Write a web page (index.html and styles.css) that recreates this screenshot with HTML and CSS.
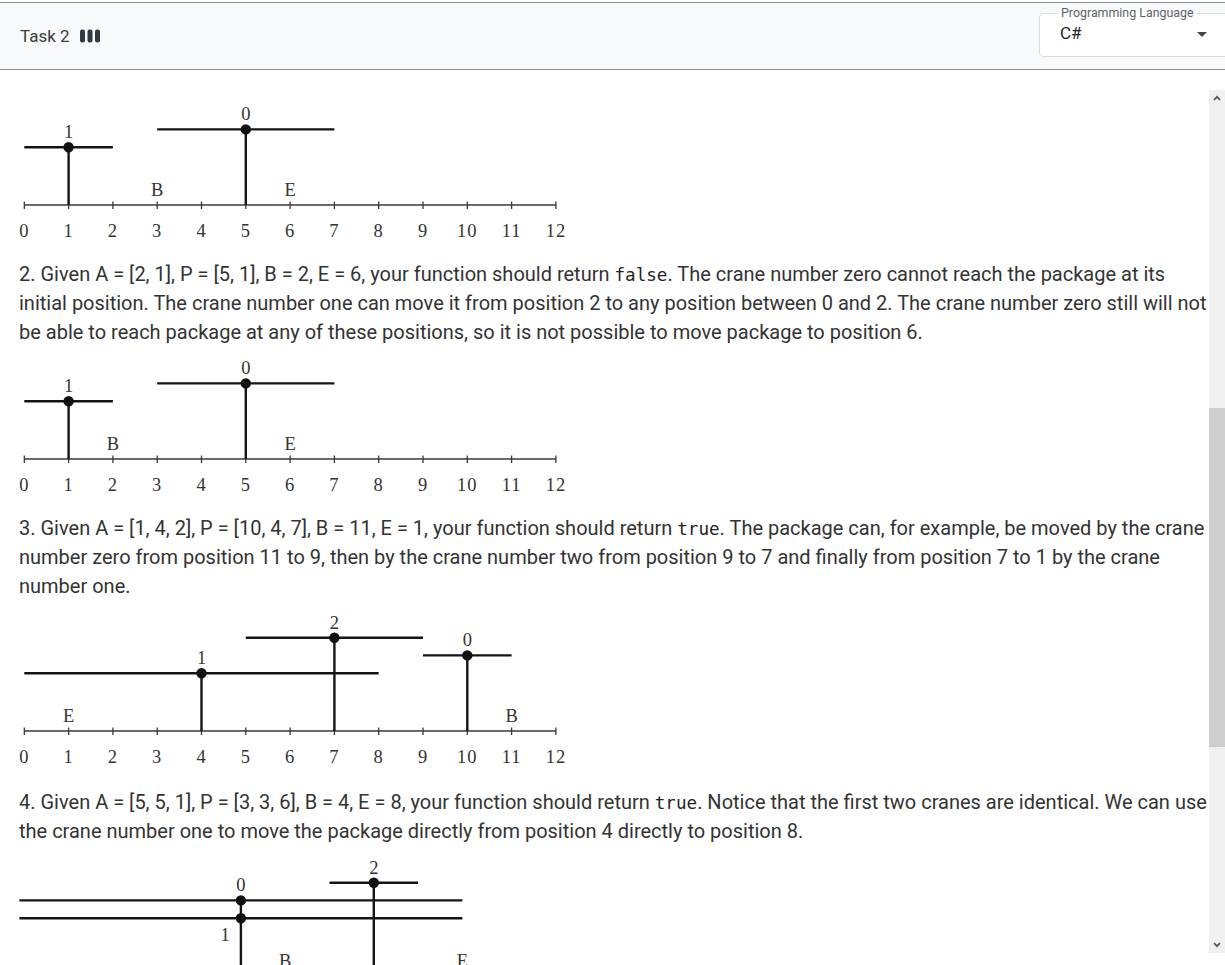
FILE: index.html
```html
<!DOCTYPE html>
<html lang="en">
<head>
<meta charset="utf-8">
<title>Task 2</title>
<link rel="stylesheet" href="styles.css">
</head>
<body>
<header class="topbar">
  <div class="task">
    <span class="task-title">Task 2</span>
    <svg class="task-icon" width="20" height="14" viewBox="0 0 20 14" aria-hidden="true">
      <rect x="0" y="0.5" width="5" height="13" rx="2"/>
      <rect x="7.5" y="0.5" width="5" height="13" rx="2"/>
      <rect x="15" y="0.5" width="5" height="13" rx="2"/>
    </svg>
  </div>
  <fieldset class="lang">
    <legend class="lang-label">Programming Language</legend>
    <div class="lang-value">
      <span>C#</span>
      <svg class="caret" width="10" height="5" viewBox="0 0 10 5" aria-hidden="true"><polygon points="0,0 10,0 5,5"/></svg>
    </div>
  </fieldset>
</header>
<main class="main">
  <div class="content">
    <svg class="diagram" width="580" height="167" viewBox="0 0 580 167">
      <line class="axis" x1="5.3" y1="112" x2="536.9" y2="112"/>
      <path class="axis" d="M5.3 108.5V116M49.6 108.5V116M93.9 108.5V116M138.2 108.5V116M182.5 108.5V116M226.8 108.5V116M271.1 108.5V116M315.4 108.5V116M359.7 108.5V116M404 108.5V116M448.3 108.5V116M492.6 108.5V116M536.9 108.5V116"/>
      <g class="num">
        <text x="5.3" y="144">0</text><text x="49.6" y="144">1</text><text x="93.9" y="144">2</text><text x="138.2" y="144">3</text><text x="182.5" y="144">4</text><text x="226.8" y="144">5</text><text x="271.1" y="144">6</text><text x="315.4" y="144">7</text><text x="359.7" y="144">8</text><text x="404" y="144">9</text><text x="448.3" y="144">10</text><text x="492.6" y="144">11</text><text x="536.9" y="144">12</text>
      </g>
      <path class="crane" d="M5.3 54.3H93.9M49.6 54.3V112"/>
      <circle class="dot" cx="49.6" cy="54.3" r="5.2"/>
      <path class="crane" d="M138.2 36.4H315.4M226.8 36.4V112"/>
      <circle class="dot" cx="226.8" cy="36.4" r="5.2"/>
      <g class="lbl">
        <text x="49.6" y="45.3">1</text><text x="226.8" y="27.4">0</text>
        <text x="138.2" y="103">B</text><text x="271.1" y="103">E</text>
      </g>
    </svg>
    <p class="text">2. Given A = [2, 1], P = [5, 1], B = 2, E = 6, your function should return <code>false</code>. The crane number zero cannot reach the package at its initial position. The crane number one can move it from position 2 to any position between 0 and 2. The crane number zero still will not be able to reach package at any of these positions, so it is not possible to move package to position 6.</p>
    <svg class="diagram" width="580" height="167" viewBox="0 0 580 167">
      <line class="axis" x1="5.3" y1="112" x2="536.9" y2="112"/>
      <path class="axis" d="M5.3 108.5V116M49.6 108.5V116M93.9 108.5V116M138.2 108.5V116M182.5 108.5V116M226.8 108.5V116M271.1 108.5V116M315.4 108.5V116M359.7 108.5V116M404 108.5V116M448.3 108.5V116M492.6 108.5V116M536.9 108.5V116"/>
      <g class="num">
        <text x="5.3" y="144">0</text><text x="49.6" y="144">1</text><text x="93.9" y="144">2</text><text x="138.2" y="144">3</text><text x="182.5" y="144">4</text><text x="226.8" y="144">5</text><text x="271.1" y="144">6</text><text x="315.4" y="144">7</text><text x="359.7" y="144">8</text><text x="404" y="144">9</text><text x="448.3" y="144">10</text><text x="492.6" y="144">11</text><text x="536.9" y="144">12</text>
      </g>
      <path class="crane" d="M5.3 54.3H93.9M49.6 54.3V112"/>
      <circle class="dot" cx="49.6" cy="54.3" r="5.2"/>
      <path class="crane" d="M138.2 36.4H315.4M226.8 36.4V112"/>
      <circle class="dot" cx="226.8" cy="36.4" r="5.2"/>
      <g class="lbl">
        <text x="49.6" y="45.3">1</text><text x="226.8" y="27.4">0</text>
        <text x="93.9" y="103">B</text><text x="271.1" y="103">E</text>
      </g>
    </svg>
    <p class="text">3. Given A = [1, 4, 2], P = [10, 4, 7], B = 11, E = 1, your function should return <code>true</code>. The package can, for example, be moved by the crane number zero from position 11 to 9, then by the crane number two from position 9 to 7 and finally from position 7 to 1 by the crane number one.</p>
    <svg class="diagram" width="580" height="187" viewBox="0 0 580 187">
      <line class="axis" x1="5.3" y1="130" x2="536.9" y2="130"/>
      <path class="axis" d="M5.3 126.5V134M49.6 126.5V134M93.9 126.5V134M138.2 126.5V134M182.5 126.5V134M226.8 126.5V134M271.1 126.5V134M315.4 126.5V134M359.7 126.5V134M404 126.5V134M448.3 126.5V134M492.6 126.5V134M536.9 126.5V134"/>
      <g class="num">
        <text x="5.3" y="162">0</text><text x="49.6" y="162">1</text><text x="93.9" y="162">2</text><text x="138.2" y="162">3</text><text x="182.5" y="162">4</text><text x="226.8" y="162">5</text><text x="271.1" y="162">6</text><text x="315.4" y="162">7</text><text x="359.7" y="162">8</text><text x="404" y="162">9</text><text x="448.3" y="162">10</text><text x="492.6" y="162">11</text><text x="536.9" y="162">12</text>
      </g>
      <path class="crane" d="M5.3 72.3H359.7M182.5 72.3V130"/>
      <circle class="dot" cx="182.5" cy="72.3" r="5.2"/>
      <path class="crane" d="M226.8 36.7H404M315.4 36.7V130"/>
      <circle class="dot" cx="315.4" cy="36.7" r="5.2"/>
      <path class="crane" d="M404 54.4H492.6M448.3 54.4V130"/>
      <circle class="dot" cx="448.3" cy="54.4" r="5.2"/>
      <g class="lbl">
        <text x="182.5" y="63.3">1</text><text x="315.4" y="27.7">2</text><text x="448.3" y="45.4">0</text>
        <text x="49.6" y="121">E</text><text x="492.6" y="121">B</text>
      </g>
    </svg>
    <p class="text">4. Given A = [5, 5, 1], P = [3, 3, 6], B = 4, E = 8, your function should return <code>true</code>. Notice that the first two cranes are identical. We can use the crane number one to move the package directly from position 4 directly to position 8.</p>
    <svg class="diagram" width="580" height="187" viewBox="0 0 580 187">
      <line class="axis" x1="89" y1="130" x2="531" y2="130"/>
      <path class="axis" d="M89 126.5V134M133.3 126.5V134M177.6 126.5V134M221.9 126.5V134M266.2 126.5V134M310.5 126.5V134M354.8 126.5V134M399.1 126.5V134M443.4 126.5V134M487.7 126.5V134M531 126.5V134"/>
      <g class="num">
        <text x="89" y="162">0</text><text x="133.3" y="162">1</text><text x="177.6" y="162">2</text><text x="221.9" y="162">3</text><text x="266.2" y="162">4</text><text x="310.5" y="162">5</text><text x="354.8" y="162">6</text><text x="399.1" y="162">7</text><text x="443.4" y="162">8</text><text x="487.7" y="162">9</text><text x="531" y="162">10</text>
      </g>
      <path class="crane" d="M0.4 54.4H443.4M0.4 72.3H443.4M221.9 54.4V130"/>
      <circle class="dot" cx="221.9" cy="54.4" r="5.2"/>
      <circle class="dot" cx="221.9" cy="72.3" r="5.2"/>
      <path class="crane" d="M310.5 36.7H399.1M354.8 36.7V130"/>
      <circle class="dot" cx="354.8" cy="36.7" r="5.2"/>
      <g class="lbl">
        <text x="221.9" y="45.4">0</text><text x="206" y="95">1</text><text x="354.8" y="27.7">2</text>
        <text x="266.2" y="121">B</text><text x="443.4" y="121">E</text>
      </g>
    </svg>
  </div>
  <div class="scrollbar" aria-hidden="true">
    <div class="sb-btn">
      <svg width="8" height="6" viewBox="0 0 8 6"><polyline points="1,5 4,1.8 7,5"/></svg>
    </div>
    <div class="sb-gap-top"></div>
    <div class="sb-thumb"></div>
    <div class="sb-gap-bottom"></div>
    <div class="sb-btn">
      <svg width="8" height="6" viewBox="0 0 8 6"><polyline points="1,1 4,4.2 7,1"/></svg>
    </div>
  </div>
</main>
</body>
</html>
```
FILE: styles.css
```css
html, body {
  margin: 0;
  height: 100%;
}

body {
  font-family: Roboto, "Noto Sans", "Liberation Sans", sans-serif;
  color: #333;
  background: #fff;
  display: flex;
  flex-direction: column;
  overflow: hidden;
}

/* ---------- header ---------- */
.topbar {
  flex: none;
  margin-top: 2px;
  height: 66px;
  border-top: 1px solid #878d94;
  border-bottom: 1px solid #878d94;
  background: #f8f9fa;
  display: flex;
  justify-content: space-between;
  align-items: flex-start;
  padding-left: 20px;
  overflow: hidden;
}

.task {
  align-self: center;
  display: flex;
  align-items: center;
  gap: 10px;
  font-size: 17px;
  color: #3a3d42;
}

.task-icon {
  display: block;
  fill: #343a45;
}

.lang {
  box-sizing: border-box;
  width: 200px;
  height: 51px;
  margin: 3px -14px 0 0;
  padding: 0 31px 0 18px;
  border: 1px solid #dadce0;
  border-radius: 4px;
  background: #fff;
  min-width: 0;
}

.lang-label {
  font-size: 12.4px;
  line-height: 14px;
  padding: 0 3px;
  color: #5f6368;
}

.lang-value {
  display: flex;
  align-items: center;
  justify-content: space-between;
  padding: 3px 0 0 2px;
  font-size: 17px;
  line-height: 20px;
  color: #222;
}

.caret {
  display: block;
  fill: #444;
  margin-top: 2px;
}

/* ---------- main ---------- */
.main {
  flex: 1;
  min-height: 0;
  display: flex;
}

.content {
  flex: 1;
  min-width: 0;
  overflow: hidden;
  padding: 23px 0 0 19px;
}

.text {
  margin: 0;
  font-size: 20px;
  line-height: 29px;
  color: #333;
}

.text code {
  font-family: "DejaVu Sans Mono", "Liberation Mono", monospace;
  font-size: 17.6px;
  line-height: 1;
  color: #222;
}

.diagram {
  display: block;
}

.axis {
  stroke: #3a3a3a;
  stroke-width: 1.3;
  fill: none;
}

.crane {
  stroke: #151515;
  stroke-width: 2.4;
  fill: none;
}

.dot {
  fill: #111;
}

.num text,
.lbl text {
  font-family: "Liberation Serif", "DejaVu Serif", serif;
  font-size: 18.5px;
  fill: #333;
  text-anchor: middle;
}

.num text {
  letter-spacing: 1px;
}

/* ---------- scrollbar ---------- */
.scrollbar {
  flex: 0 0 16px;
  margin: 20px 0 12px;
  background: #f0f0f0;
  display: flex;
  flex-direction: column;
}

.sb-btn {
  flex: 0 0 16px;
  display: flex;
  align-items: center;
  justify-content: center;
}

.sb-btn svg {
  display: block;
  fill: none;
  stroke: #555;
  stroke-width: 1.8;
}

.sb-gap-top {
  flex: 0 0 302px;
}

.sb-thumb {
  flex: 0 0 339px;
  background: #cdcdcd;
}

.sb-gap-bottom {
  flex: 1;
}
```
